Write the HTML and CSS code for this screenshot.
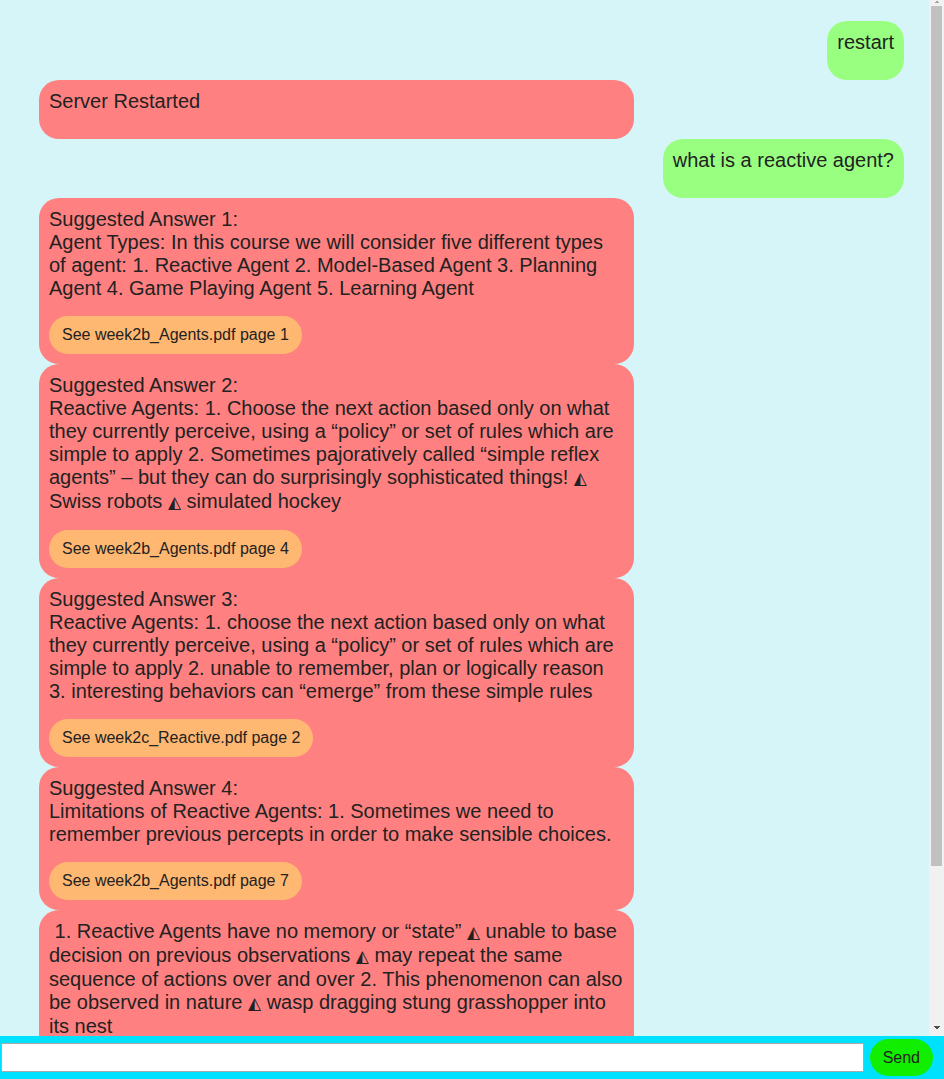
FILE: index.html
```html
<!DOCTYPE html>
<html>
<head>
<meta charset="utf-8">
<title>Chat</title>
<link rel="stylesheet" href="styles.css">
</head>
<body>
<div class="viewport">
  <div class="chat">
    <div class="msg user"><div class="bubble"><div class="text">restart</div></div></div>
    <div class="msg bot"><div class="bubble"><div class="text">Server Restarted</div></div></div>
    <div class="msg user"><div class="bubble"><div class="text">what is a reactive agent?</div></div></div>
    <div class="msg bot"><div class="bubble">
      <div class="text">Suggested Answer 1:<br>Agent Types: In this course we will consider five different types of agent: 1. Reactive Agent 2. Model-Based Agent 3. Planning Agent 4. Game Playing Agent 5. Learning Agent</div>
      <button class="source">See week2b_Agents.pdf page 1</button>
    </div></div>
    <div class="msg bot"><div class="bubble">
      <div class="text">Suggested Answer 2:<br>Reactive Agents: 1. Choose the next action based only on what they currently perceive, using a “policy” or set of rules which are simple to apply 2. Sometimes pajoratively called “simple reflex agents” – but they can do surprisingly sophisticated things! <span class="tri">◭</span> Swiss robots <span class="tri">◭</span> simulated hockey</div>
      <button class="source">See week2b_Agents.pdf page 4</button>
    </div></div>
    <div class="msg bot"><div class="bubble">
      <div class="text">Suggested Answer 3:<br>Reactive Agents: 1. choose the next action based only on what they currently perceive, using a “policy” or set of rules which are simple to apply 2. unable to remember, plan or logically reason 3. interesting behaviors can “emerge” from these simple rules</div>
      <button class="source">See week2c_Reactive.pdf page 2</button>
    </div></div>
    <div class="msg bot"><div class="bubble">
      <div class="text">Suggested Answer 4:<br>Limitations of Reactive Agents: 1. Sometimes we need to remember previous percepts in order to make sensible choices.</div>
      <button class="source">See week2b_Agents.pdf page 7</button>
    </div></div>
    <div class="msg bot"><div class="bubble">
      <div class="text">&nbsp;1. Reactive Agents have no memory or “state” <span class="tri">◭</span> unable to base decision on previous observations <span class="tri">◭</span> may repeat the same sequence of actions over and over 2. This phenomenon can also be observed in nature <span class="tri">◭</span> wasp dragging stung grasshopper into its nest</div>
      <button class="source">See week2b_Agents.pdf page 8</button>
    </div></div>
  </div>
  <div class="scrollbar">
    <div class="sb-up"></div>
    <div class="sb-thumb"></div>
    <div class="sb-track"></div>
    <div class="sb-down"></div>
  </div>
</div>
<div class="composer">
  <input class="field" type="text">
  <button class="send">Send</button>
</div>
</body>
</html>
```

FILE: styles.css
```css
html, body {
  margin: 0;
  padding: 0;
  height: 100%;
  overflow: hidden;
  font-family: "Liberation Sans", Arial, sans-serif;
}

body {
  display: flex;
  flex-direction: column;
  background: #d6f5f8;
}

.viewport {
  flex: 0 0 1036px;
  height: 1036px;
  display: flex;
  overflow: hidden;
}

.chat {
  flex: 1 1 auto;
  overflow: hidden;
  background: #d6f5f8;
  display: flex;
  flex-direction: column;
  padding: 21px 25px 110px 39px;
  box-sizing: border-box;
}

.scrollbar {
  flex: 0 0 15px;
  width: 15px;
  background: #f1f1f1;
  display: flex;
  flex-direction: column;
}

.sb-up {
  flex: 0 0 6px;
  background: conic-gradient(from 140deg at 50% 0%, #a3a3a3 0 80deg, transparent 80deg) center 0 / 8px 3px no-repeat;
}

.sb-thumb {
  flex: 0 0 860px;
  margin: 0 2px;
  background: #c1c1c1;
}

.sb-track {
  flex: 1 1 auto;
}

.sb-down {
  flex: 0 0 15px;
  background: conic-gradient(from 320deg at 50% 100%, #505050 0 80deg, transparent 80deg) center 5px / 8px 4px no-repeat;
}

.msg {
  display: flex;
}

.msg.user {
  justify-content: flex-end;
}

.msg.bot {
  justify-content: flex-start;
}

.bubble {
  padding: 10px;
  border-radius: 20px;
  color: #222;
  font-size: 20px;
  line-height: normal;
}

.user .bubble {
  background: #99ff80;
}

.bot .bubble {
  background: #ff8080;
  width: 595px;
  box-sizing: border-box;
}

.text {
  margin-bottom: 16px;
}

.tri {
  font-family: "DejaVu Sans", sans-serif;
  font-size: 17px;
  font-weight: bold;
  line-height: 24px;
}

.source {
  display: inline-block;
  border: none;
  background: #ffb871;
  color: #222;
  font-family: "Liberation Sans", Arial, sans-serif;
  font-size: 16px;
  line-height: 18px;
  padding: 10px 13px;
  border-radius: 20px;
  margin: 0;
}

.composer {
  flex: 1 1 auto;
  background: #00e1ff;
  display: flex;
  align-items: center;
  gap: 6px;
  padding: 0 11px 0 1px;
}

.field {
  flex: 1 1 auto;
  height: 29px;
  box-sizing: border-box;
  border: 1px solid #a9a9a9;
  background: #fff;
  margin: 0;
  padding: 2px 4px;
  font-size: 16px;
}

.send {
  border: none;
  background: #11ee00;
  color: #222;
  font-family: "Liberation Sans", Arial, sans-serif;
  font-size: 16px;
  line-height: 18px;
  padding: 10px 13px 9px;
  border-radius: 20px;
  margin: 0;
}
```
